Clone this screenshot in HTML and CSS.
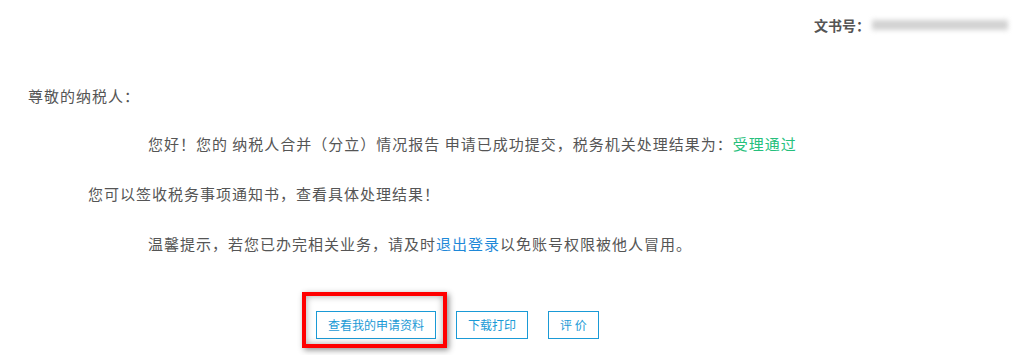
FILE: index.html
```html
<!DOCTYPE html>
<html lang="zh-CN">
<head>
<meta charset="utf-8">
<link rel="stylesheet" href="styles.css">
</head>
<body>
<div class="doc-no">
  <span class="doc-label">文书号：</span>
  <span class="doc-value" aria-hidden="true"></span>
</div>
<div class="letter">
  <p class="line greeting">尊敬的纳税人：</p>
  <p class="line indent-2">您好！您的 纳税人合并（分立）情况报告 申请已成功提交，税务机关处理结果为：<span class="ok">受理通过</span></p>
  <p class="line indent-1">您可以签收税务事项通知书，查看具体处理结果！</p>
  <p class="line indent-2">温馨提示，若您已办完相关业务，请及时<a class="link">退出登录</a>以免账号权限被他人冒用。</p>
</div>
<div class="actions">
  <span class="highlight-wrap">
    <button class="btn">查看我的申请资料</button>
    <span class="highlight"></span>
  </span>
  <button class="btn">下载打印</button>
  <button class="btn">评 价</button>
</div>
</body>
</html>
```
FILE: styles.css
```css
html, body {
  margin: 0;
  padding: 0;
  background: #fff;
}
body {
  font-family: "Microsoft YaHei", "Noto Sans CJK SC", "Noto Sans", sans-serif;
  color: #555;
  width: 1029px;
  height: 355px;
  overflow: hidden;
}
.doc-no {
  display: flex;
  justify-content: flex-end;
  align-items: center;
  height: 20px;
  padding: 15px 21px 0 0;
}
.doc-label {
  font-size: 14px;
  font-weight: bold;
  color: #555;
}
.doc-value {
  display: inline-block;
  width: 136px;
  height: 10px;
  margin-left: 2px;
  background: #d2d2d2;
  filter: blur(2.5px);
}
.letter {
  display: flex;
  flex-direction: column;
  gap: 30px;
  padding: 51px 0 0 28px;
}
.line {
  margin: 0;
  font-size: 15px;
  letter-spacing: 1px;
  line-height: 20px;
  white-space: nowrap;
}
.greeting {
  margin-bottom: -2px;
}
.indent-2 {
  padding-left: 120px;
}
.indent-1 {
  padding-left: 60px;
}
.ok {
  color: #26bf7c;
}
.link {
  color: #1e88d8;
  text-decoration: none;
}
.actions {
  display: flex;
  gap: 20px;
  padding: 57px 0 0 316px;
}
.highlight-wrap {
  position: relative;
  display: inline-flex;
}
.btn {
  height: 28px;
  padding: 0 11px;
  border: 1px solid #1a9ad6;
  background: #fff;
  color: #1a9ad6;
  font-family: "Microsoft YaHei", "Noto Sans CJK SC", sans-serif;
  font-size: 12px;
  line-height: 26px;
  white-space: nowrap;
  cursor: pointer;
}
.highlight {
  position: absolute;
  left: -14px;
  right: -11px;
  top: -19px;
  bottom: -9px;
  border: 4px solid #ff0000;
  box-shadow: 2px 2px 6px rgba(0, 0, 0, 0.45), inset 0 0 7px rgba(0, 0, 0, 0.35);
  pointer-events: none;
}
```
